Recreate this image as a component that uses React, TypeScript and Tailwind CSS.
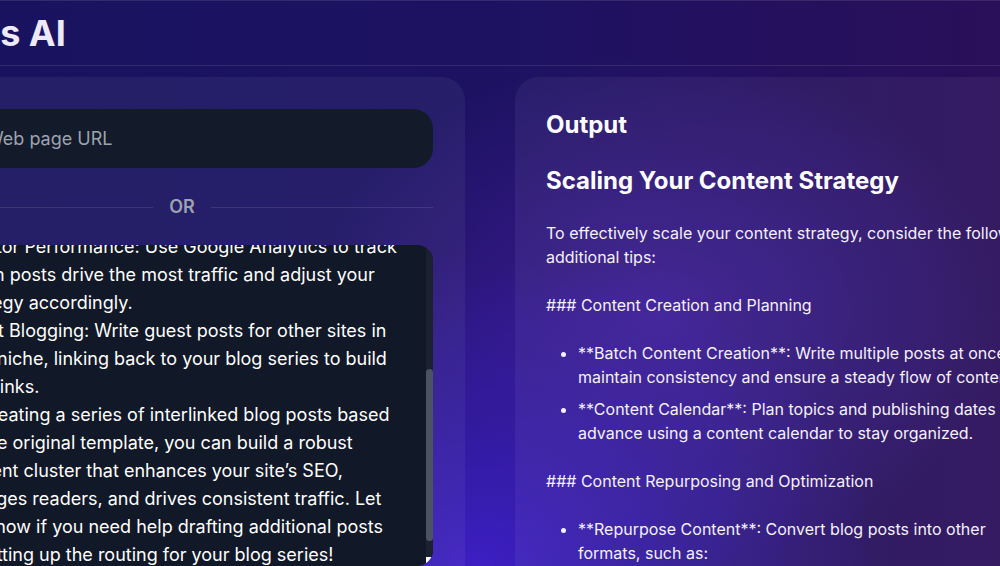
import React from "react";

const draftLines = [
  "Monitor Performance: Use Google Analytics to track",
  "which posts drive the most traffic and adjust your",
  "strategy accordingly.",
  "Guest Blogging: Write guest posts for other sites in",
  "your niche, linking back to your blog series to build",
  "backlinks.",
  "By creating a series of interlinked blog posts based",
  "on the original template, you can build a robust",
  "content cluster that enhances your site’s SEO,",
  "engages readers, and drives consistent traffic. Let",
  "me know if you need help drafting additional posts",
  "or setting up the routing for your blog series!",
];

export default function App() {
  return (
    <div className="relative h-[566px] w-[1000px] overflow-hidden font-['Inter',sans-serif] text-white bg-[image:radial-gradient(ellipse_40%_55%_at_48%_100%,#3d1fc4_0%,transparent_100%),radial-gradient(ellipse_35%_45%_at_66%_55%,#3b1c92_0%,transparent_100%),linear-gradient(to_right,#19135f,#1d1262_50%,#2a0f5a)]">
      <div className="-ml-[133px] w-[1246px]">
        {/* Header */}
        <header className="border-y border-white/10 px-8 py-3">
          <h1 className="ml-[10px] text-4xl font-bold leading-10 text-[#ece9fb]">Series AI</h1>
        </header>

        <main className="grid grid-cols-2 gap-[50px] px-8 pt-[11px]">
          {/* Input card */}
          <section className="h-[600px] rounded-3xl bg-white/5 p-8">
            <div className="flex h-[59px] items-center rounded-[20px] bg-[#131a29] pl-[55px] text-lg text-[#9ca3af]">
              Web page URL
            </div>

            <div className="mb-6 mt-[25px] flex items-center gap-4">
              <div className="h-px flex-1 bg-white/10" />
              <span className="text-lg font-semibold leading-7 text-[#9ca3af]">OR</span>
              <div className="h-px flex-1 bg-white/10" />
            </div>

            <div className="relative h-[321px] overflow-hidden rounded-2xl bg-[#111827] pl-[23px]">
              <div className="-mt-3">
                {draftLines.map((line) => (
                  <div key={line} className="whitespace-nowrap text-lg leading-7 text-white">
                    {line}
                  </div>
                ))}
              </div>

              {/* scrollbar */}
              <div className="absolute bottom-[9px] right-0 top-0 w-[7px] bg-[#1b2130]">
                <div className="absolute left-0 right-0 top-[124px] h-[172px] rounded-full bg-[#4b5262]" />
              </div>
              {/* resize grip */}
              <div className="absolute bottom-px right-0 flex h-[8px] w-[7px] items-end justify-end bg-white">
                <svg width="6" height="6" viewBox="0 0 6 6">
                  <path d="M5.5 1.5 L1.5 5.5 M5.5 3.5 L3.5 5.5" stroke="#777" strokeWidth="0.8" />
                </svg>
              </div>
            </div>
          </section>

          {/* Output card */}
          <section className="h-[600px] rounded-3xl bg-white/5 p-8 pl-[31px] text-[#f3f1fb]">
            <h2 className="mb-6 text-2xl font-bold leading-8 text-white">Output</h2>
            <h3 className="mb-6 text-2xl font-bold leading-8 text-white">Scaling Your Content Strategy</h3>
            <p className="mb-6 text-base leading-6">
              <span className="whitespace-nowrap">To effectively scale your content strategy, consider the following</span>
              <br />
              additional tips:
            </p>
            <p className="mb-6 text-base leading-6">### Content Creation and Planning</p>
            <ul className="mb-6 list-disc space-y-2 pl-8 text-base leading-6">
              <li>
                <span className="whitespace-nowrap">**Batch Content Creation**: Write multiple posts at once to</span>
                <br />
                <span className="whitespace-nowrap">maintain consistency and ensure a steady flow of content.</span>
              </li>
              <li>
                <span className="whitespace-nowrap">**Content Calendar**: Plan topics and publishing dates in</span>
                <br />
                <span className="whitespace-nowrap">advance using a content calendar to stay organized.</span>
              </li>
            </ul>
            <p className="mb-6 text-base leading-6">### Content Repurposing and Optimization</p>
            <ul className="list-disc space-y-2 pl-8 text-base leading-6">
              <li>
                <span className="whitespace-nowrap">**Repurpose Content**: Convert blog posts into other</span>
                <br />
                formats, such as:
              </li>
            </ul>
          </section>
        </main>
      </div>
    </div>
  );
}
